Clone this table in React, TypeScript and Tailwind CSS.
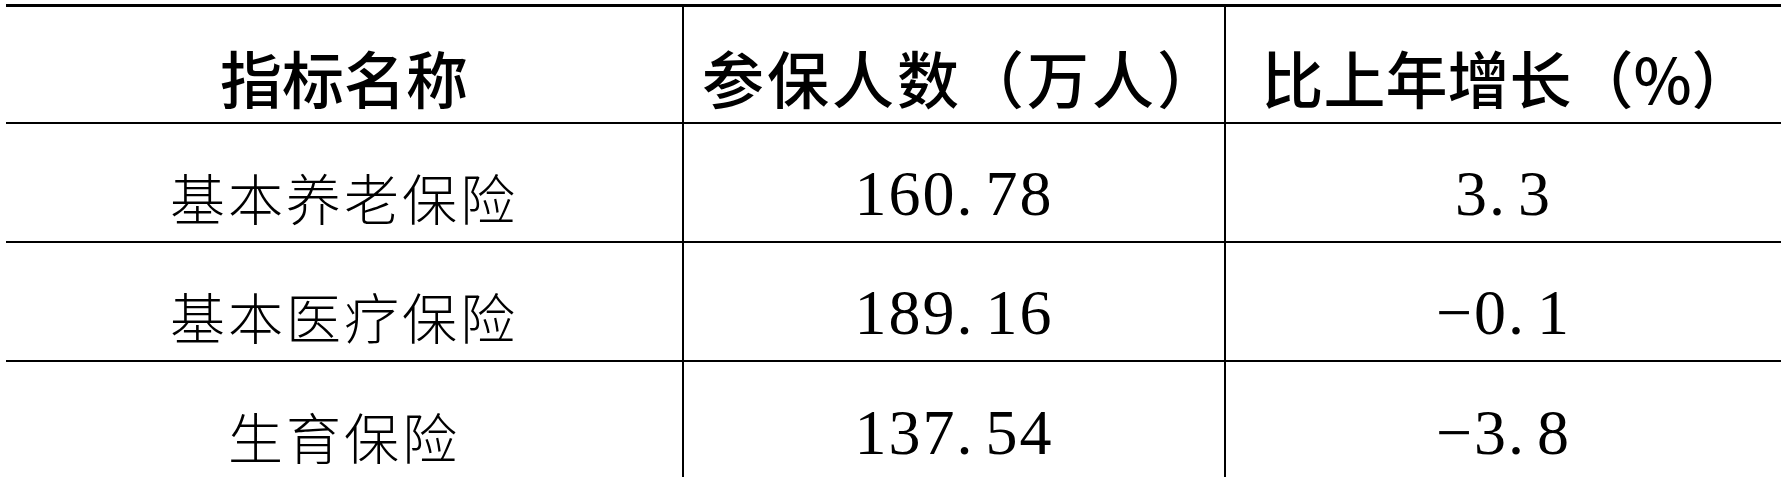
const rows = [
  { name: "基本养老保险", count: "160.78", rate: "3.3" },
  { name: "基本医疗保险", count: "189.16", rate: "−0.1" },
  { name: "生育保险", count: "137.54", rate: "−3.8" },
];

function Num({ value }: { value: string }) {
  const [a, b] = value.split(".");
  return (
    <span className="font-['Liberation_Serif',serif] text-[64px] leading-none tracking-[2px]">
      {a}
      <span className="tracking-[13px]">.</span>
      {b}
    </span>
  );
}

export default function App() {
  const cjk = "font-['Noto_Sans_CJK_SC',sans-serif]";
  return (
    <div className="bg-white w-[1786px] h-[477px] overflow-hidden pt-1 pl-[6px] pr-[5px]">
      <div className="border-t-[3px] border-black grid grid-cols-[676px_542px_557px]">
        {/* header */}
        <div className={`h-[117px] border-b-2 border-black flex items-center justify-center pt-6 ${cjk} font-medium text-[62px] leading-none text-black`}>
          指标名称
        </div>
        <div className={`h-[117px] border-b-2 border-l-2 border-black flex items-center justify-center pt-6 pl-4 ${cjk} font-medium text-[62px] leading-none tracking-[3px] text-black`}>
          参保人数（万人）
        </div>
        <div className={`h-[117px] border-b-2 border-l-2 border-black flex items-center justify-center pt-6 pl-2 ${cjk} font-medium text-[62px] leading-none text-black`}>
          比上年增长（%）
        </div>

        {rows.map((r, i) => {
          const last = i === rows.length - 1;
          const b = last ? "" : "border-b-2";
          return (
            <div key={r.name} className="contents">
              <div className={`h-[119px] ${b} border-black flex items-center justify-center pt-7 ${cjk} font-light text-[55px] leading-none tracking-[3px] text-black`}>
                {r.name}
              </div>
              <div className={`h-[119px] ${b} border-l-2 border-black flex items-center justify-center pt-[22px] text-black`}>
                <Num value={r.count} />
              </div>
              <div className={`h-[119px] ${b} border-l-2 border-black flex items-center justify-center pt-[22px] text-black`}>
                <Num value={r.rate} />
              </div>
            </div>
          );
        })}
      </div>
    </div>
  );
}
